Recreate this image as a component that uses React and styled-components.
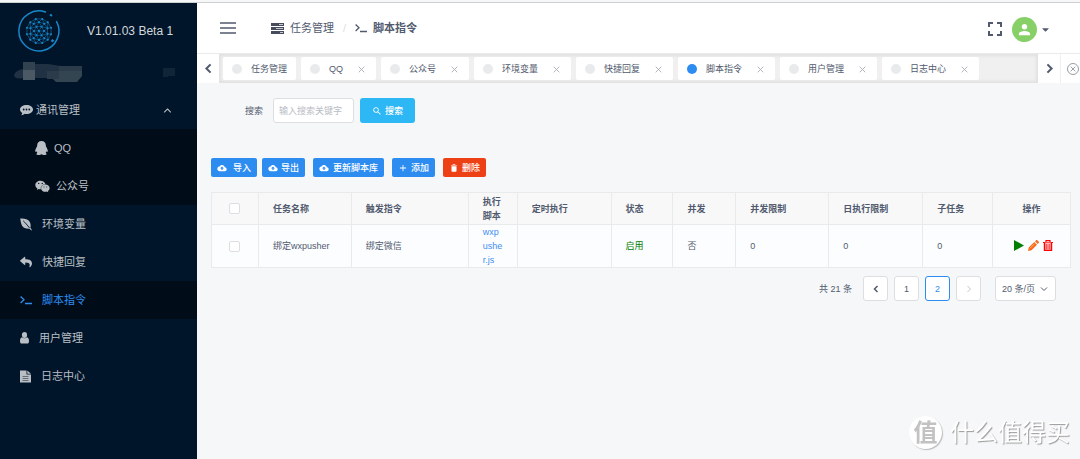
import React from "react";
import styled, { createGlobalStyle } from "styled-components";
import {
  IoMdCloudUpload,
  IoMdAdd,
  IoMdTrash,
  IoMdSearch,
  IoMdPerson,
  IoIosArrowUp,
} from "react-icons/io";
import { FaWeixin, FaReply, FaCaretDown } from "react-icons/fa";

const GlobalStyle = createGlobalStyle`
  * {
    box-sizing: border-box;
  }
  body {
    margin: 0;
    padding-top: 2px;
    background: #f5f7f9;
    color: #515a6e;
    font-family: "Liberation Sans", "Noto Sans CJK SC", sans-serif;
    font-size: 9px;
    line-height: 14px;
  }
  button, input, select {
    font: inherit;
    color: inherit;
    margin: 0;
  }
  button {
    cursor: pointer;
  }
  svg {
    display: block;
    flex-shrink: 0;
  }
`;

const Page = styled.div`
  display: flex;
  min-height: calc(100vh - 2px);
  border-top: 1px solid #cdcfd1;
`;

/* ---------- sidebar ---------- */

const Sidebar = styled.aside`
  width: 197px;
  flex-shrink: 0;
  background: #001529;
  color: #b9bfc5;
`;

const Brand = styled.div`
  display: flex;
  align-items: center;
  gap: 27px;
  height: 51px;
  padding: 4px 0 0 18px;
  font-size: 12px;
  color: #d3d8dc;
`;

const Account = styled.div`
  display: flex;
  align-items: center;
  justify-content: space-between;
  height: 37px;
  padding: 0 22px 0 14px;
`;

const Menu = styled.ul`
  list-style: none;
  margin: 0;
  padding: 0;
`;

const SubMenu = styled(Menu)`
  background: #000c17;
`;

const MenuLink = styled.a`
  display: flex;
  align-items: center;
  gap: ${(p) => p.$gap || 10}px;
  height: 38px;
  padding: 0 24px 0 ${(p) => (p.$nested ? 35 : 20)}px;
  font-size: 11px;
  text-decoration: none;
  color: ${(p) => (p.$active ? "#2d8cf0" : "inherit")};
  background: ${(p) => (p.$active ? "#000c17" : "transparent")};

  > .arrow {
    margin-left: auto;
  }
`;

/* ---------- header ---------- */

const Main = styled.div`
  flex: 1;
  min-width: 0;
`;

const Header = styled.header`
  display: flex;
  align-items: center;
  height: 51px;
  padding: 0 29px 0 23px;
  background: #fff;
  border-bottom: 1px solid #e8eaec;
`;

const IconButton = styled.button`
  display: flex;
  align-items: center;
  padding: 0;
  border: 0;
  background: none;
`;

const Crumbs = styled.nav`
  display: flex;
  align-items: center;
  gap: 6px;
  margin-left: 35px;
  font-size: 11px;
`;

const Crumb = styled.span`
  display: flex;
  align-items: center;
  gap: 6px;
  font-weight: ${(p) => (p.$current ? 700 : 400)};
`;

const Slash = styled.span`
  padding: 0 3px;
  color: #dcdee2;
`;

const Tools = styled.div`
  display: flex;
  align-items: center;
  gap: 10px;
  margin-left: auto;
  padding-top: 2px;
`;

const UserButton = styled(IconButton)`
  gap: 3px;
`;

const Avatar = styled.span`
  display: flex;
  align-items: center;
  justify-content: center;
  width: 25px;
  height: 25px;
  border-radius: 50%;
  background: #87d068;
  color: #fff;
`;

/* ---------- tabs ---------- */

const TabBar = styled.div`
  display: flex;
  height: 29px;
  background: #fff;
`;

const TabArrow = styled(IconButton)`
  justify-content: center;
  width: 22px;
  flex-shrink: 0;
`;

const CloseAll = styled(IconButton)`
  width: 20px;
  padding-left: 6px;
  border-left: 1px solid #f0f0f0;
  color: #8d929c;
`;

const TabList = styled.div`
  display: flex;
  flex: 1;
  gap: 5px;
  min-width: 0;
  padding: 3px 4px;
  overflow: hidden;
  background: #f0f0f0;
  box-shadow: inset 0 0 3px 2px rgba(100, 100, 100, 0.1);
`;

const Tab = styled.div`
  display: flex;
  align-items: center;
  gap: 9px;
  flex-shrink: 0;
  padding: 0 9px;
  border-radius: 2px;
  background: #fff;
`;

const Dot = styled.span`
  width: 10px;
  height: 10px;
  border-radius: 50%;
  background: ${(p) => (p.$active ? "#2d8cf0" : "#e8eaec")};
`;

const TabClose = styled(IconButton)`
  padding: 1px 2px 0 6px;
  color: #a9adb5;
`;

/* ---------- content ---------- */

const Content = styled.main`
  padding: 15px 9px 15px 14px;
`;

const SearchForm = styled.form`
  display: flex;
  align-items: center;
  gap: 6px;
  padding-left: 34px;
`;

const SearchLabel = styled.label`
  margin-right: 4px;
`;

const SearchInput = styled.input`
  width: 81px;
  height: 25px;
  padding: 0 5px;
  border: 1px solid #dcdee2;
  border-radius: 3px;
  background: #fff;
  outline: none;

  &::placeholder {
    color: #b8bcc4;
  }
`;

const Button = styled.button`
  display: inline-flex;
  align-items: center;
  justify-content: center;
  gap: ${(p) => p.$gap || 3}px;
  height: 19px;
  padding: 0 6px;
  border: 0;
  border-radius: 2px;
  font-weight: 500;
  color: #fff;
  background: ${(p) => p.$color || "#2d8cf0"};
`;

const SearchButton = styled(Button)`
  height: 25px;
  padding: 0 12px;
  border-radius: 3px;
`;

const Actions = styled.div`
  display: flex;
  gap: 8px;
  margin: 35px 0 15px;
`;

const ButtonPair = styled.div`
  display: flex;
  gap: 5px;
`;

const Table = styled.table`
  width: 100%;
  table-layout: fixed;
  border-collapse: collapse;
  border: 1px solid #dcdee2;
`;

const Th = styled.th`
  height: 32px;
  padding: 0 14px;
  border: 1px solid #e8eaec;
  background: #f8f8f9;
  text-align: ${(p) => (p.$center ? "center" : "left")};
  font-weight: 700;
`;

const Td = styled.td`
  height: 42px;
  padding: 0 14px;
  border: 1px solid #e8eaec;
  background: #fcfdff;
  word-break: break-all;
  color: ${(p) => p.$color || "inherit"};
`;

const Check = styled.input`
  display: block;
  appearance: none;
  width: 11px;
  height: 11px;
  margin: 0 auto;
  border: 1px solid #dcdee2;
  border-radius: 2px;
  background: #fff;
`;

const ScriptLink = styled.a`
  color: #3f8ff2;
  text-decoration: none;
`;

const RowTools = styled.div`
  display: flex;
  align-items: center;
  justify-content: flex-end;
  gap: 4px;
  padding: 0 3px 2px 0;
`;

const Pager = styled.div`
  display: flex;
  align-items: center;
  justify-content: flex-end;
  gap: 6px;
  margin: 8px 15px 0 0;
`;

const Total = styled.span`
  margin-right: 5px;
`;

const PageButton = styled.button`
  display: flex;
  align-items: center;
  justify-content: center;
  width: 25px;
  height: 25px;
  padding: 0;
  border: 1px solid ${(p) => (p.$current ? "#2d8cf0" : "#dcdee2")};
  border-radius: 3px;
  background: #fff;
  color: ${(p) => (p.$current ? "#2d8cf0" : "#515a6e")};

  &:disabled {
    color: #c5c8ce;
  }
`;

const SizeBox = styled.div`
  position: relative;
  margin-left: 8px;

  svg {
    position: absolute;
    right: 8px;
    top: 9px;
    pointer-events: none;
  }
`;

const SizeSelect = styled.select`
  display: block;
  appearance: none;
  width: 61px;
  height: 25px;
  padding: 0 6px;
  border: 1px solid #dcdee2;
  border-radius: 3px;
  background: #fff;
`;

const Watermark = styled.div`
  position: fixed;
  right: 10px;
  bottom: 10px;
  display: flex;
  align-items: center;
  gap: 8px;
  font-size: 24px;
  line-height: 33px;
  color: #fff;
  text-shadow: 1px 1px 1px #999;
`;

const WatermarkBadge = styled.span`
  width: 33px;
  height: 33px;
  border-radius: 50%;
  background: #fff;
  box-shadow: 1px 1px 1px #bbb;
  text-align: center;
  font-weight: 700;
  color: #c2c2c2;
  text-shadow: none;
`;

/* ---------- icons ---------- */

const ring = (count, radius, offset = 0) =>
  Array.from({ length: count }, (_, i) => {
    const a = ((i + offset) * 2 * Math.PI) / count;
    return [21 + radius * Math.cos(a), 21 + radius * Math.sin(a)];
  });

function Logo() {
  const inner = ring(6, 5);
  const outer = ring(12, 12.5, 0.5);
  const middle = ring(10, 9, 0.5);
  const points = [[21, 21], ...inner, ...middle, ...outer];
  const lines = [];
  points.forEach((a, i) => {
    points.slice(i + 1).forEach((b) => {
      if (Math.hypot(a[0] - b[0], a[1] - b[1]) < 6.6) lines.push([a, b]);
    });
  });
  return (
    <svg width="42" height="42" viewBox="0 0 42 42" fill="none" stroke="#1787cb">
      <path d="M28 2.200A20 20 0 1 0 38.400 11.200" strokeWidth="1.500" />
      <path d="M32 4.500l2 1.400" strokeWidth="2" />
      <path d="M33.500 30l2 1.600" strokeWidth="2.500" />
      {lines.map(([a, b], i) => (
        <path key={i} d={`M${a[0]} ${a[1]}L${b[0]} ${b[1]}`} strokeWidth=".5" />
      ))}
      {points.map(([x, y], i) => (
        <circle key={i} cx={x} cy={y} r="1" fill="#1787cb" stroke="none" />
      ))}
    </svg>
  );
}

const NameMosaic = () => (
  <svg width="73" height="21" viewBox="0 0 73 21">
    <path d="M0 13q2-5 9-6V0h12v2h13l13 2h21v10l-5 5H42l-4-3H9Q1 18 0 13z" fill="#1f3142" />
    <path d="M9 0h12v8H9z" fill="#33424f" />
    <path d="M9 8h12v10H9z" fill="#4b5965" />
    <path d="M33 9h12v8H33zM45 4h23v5H45z" fill="#2b3b4a" />
    <path d="M45 9h23v5l-5 6H42l-3-3h6z" fill="#344552" />
  </svg>
);

const ArrowMosaic = () => (
  <svg width="12" height="9" viewBox="0 0 12 9">
    <path d="M0 0h12v8H5v1H0z" fill="#112539" />
  </svg>
);

const ChatIcon = () => (
  <svg width="13" height="12" viewBox="0 0 13 12">
    <path
      fill="currentColor"
      d="M6.500 1C3 1 0 2.900 0 5.500c0 1.500.9 2.700 2.300 3.500-.2.900-.6 1.500-1.100 2.200 1.500-.2 2.700-.7 3.600-1.400.5.1 1.100.2 1.700.2C10 10 13 8 13 5.500S10 1 6.500 1z"
    />
    <circle cx="3.700" cy="5.500" r=".9" fill="#001529" />
    <circle cx="6.500" cy="5.500" r=".9" fill="#001529" />
    <circle cx="9.300" cy="5.500" r=".9" fill="#001529" />
  </svg>
);

const QqIcon = () => (
  <svg width="13" height="14" viewBox="0 0 13 14">
    <path
      fill="currentColor"
      d="M6.500 0C3.800 0 2.200 1.800 2.200 4.200c0 .5-.2.900-.3 1.500C1 7 .2 8.700.2 10.200c0 .8.500.9 1.200.1.200.6.500 1.100 1 1.600-.7.300-1 .7-1 1.100 0 1.300 3.900 1.200 5.100.3 1.200.9 5.100 1 5.100-.3 0-.4-.3-.8-1-1.100.5-.5.800-1 1-1.600.7.800 1.200.7 1.200-.1 0-1.500-.8-3.200-1.700-4.500-.1-.6-.3-1-.3-1.500C10.800 1.800 9.200 0 6.500 0z"
    />
  </svg>
);

const LeafIcon = () => (
  <svg width="12" height="13" viewBox="0 0 12 13">
    <path
      fill="currentColor"
      d="M.2.500C4 .2 8 .8 9.800 4c1 1.800 1 3.800.6 5.800l1.500 2.200-.7.500-1.500-1.800C6.500 11 3.300 10.200 1.800 7.200.8 5.200.7 2.700.2.500z"
    />
    <path d="M3.200 2.800C5 4.500 7.500 7.200 9.500 10" stroke="#001529" strokeWidth=".9" fill="none" />
  </svg>
);

const TerminalIcon = ({ color = "currentColor" }) => (
  <svg width="12" height="10" viewBox="0 0 12 10" fill="none" stroke={color} strokeWidth="1.300">
    <path d="M.6 1.500L4 4.700.6 8M5 8.500h7" />
  </svg>
);

const PersonIcon = () => (
  <svg width="9" height="12" viewBox="0 0 9 12" fill="currentColor">
    <ellipse cx="4.500" cy="3" rx="2.600" ry="2.900" />
    <path d="M2 5.300C.6 5.600 0 7 0 9c0 1.600.6 2.600 1.800 2.600h5.400C8.400 11.600 9 10.600 9 9c0-2-.6-3.400-2-3.700-1.400 1.400-3.600 1.400-5 0z" />
  </svg>
);

const FileIcon = () => (
  <svg width="11" height="13" viewBox="0 0 11 13">
    <path fill="currentColor" d="M0 .500h6.500v4H11v8H0zM7.300.500L11 3.800H7.300z" />
    <path d="M2.500 6.500h6M2.500 8.500h6M2.500 10.500h6" stroke="#4b5865" strokeWidth=".8" />
  </svg>
);

const MenuIcon = () => (
  <svg width="16" height="12" viewBox="0 0 16 12" stroke="#515a6e" strokeWidth="1.300">
    <path d="M0 1h16M0 6h16M0 11h16" />
  </svg>
);

const TasksIcon = () => (
  <svg width="13" height="11" viewBox="0 0 13 11">
    <path fill="#464c5b" d="M0 0h13v3H0zM0 4h13v3H0zM0 8h13v3H0z" />
    <path stroke="#c4c8d0" strokeWidth="1" d="M8 1.500h4M5 5.500h7M9 9.500h3" />
  </svg>
);

const FullscreenIcon = () => (
  <svg width="14" height="14" viewBox="0 0 14 14" fill="none" stroke="#515a6e" strokeWidth="2">
    <path d="M1 5V1h4M9 1h4v4M13 9v4H9M5 13H1V9" />
  </svg>
);

const Chevron = ({ dir = "left", size = 8, width = 1.5 }) => {
  const d = { left: "M5.500 1L2.500 4l3 3", right: "M2.500 1l3 3-3 3", down: "M1 2.500l3 3 3-3" };
  return (
    <svg width={size} height={size} viewBox="0 0 8 8" fill="none" stroke="currentColor" strokeWidth={width}>
      <path d={d[dir]} />
    </svg>
  );
};

const CrossIcon = () => (
  <svg width="7" height="7" viewBox="0 0 7 7" stroke="currentColor" strokeWidth=".9">
    <path d="M.7.700l5.600 5.600M6.300.700L.7 6.300" />
  </svg>
);

const CircleCloseIcon = () => (
  <svg width="12" height="12" viewBox="0 0 12 12" fill="none" stroke="currentColor" strokeWidth=".9">
    <circle cx="6" cy="6" r="5.500" />
    <path d="M3.700 3.700l4.600 4.600M8.300 3.700L3.700 8.300" />
  </svg>
);

const PlayIcon = () => (
  <svg width="10" height="11" viewBox="0 0 10 11">
    <path d="M0 0l10 5.500L0 11z" fill="green" />
  </svg>
);

const PencilIcon = () => (
  <svg width="11" height="11" viewBox="0 0 11 11">
    <path d="M0 11l.7-3.500L6.300 2l2.700 2.700-5.500 5.600zM7 1.300L8.300 0q.5-.2 1 .2l1.500 1.500q.4.500 0 1L9.700 4z" fill="#fa6b18" />
    <path d="M2 8.300l4.600-4.600" stroke="#ffc59b" strokeWidth=".7" />
  </svg>
);

const BinIcon = () => (
  <svg width="10" height="11" viewBox="0 0 10 11" fill="none" stroke="red">
    <path d="M0 2.500h10M3 2.500V.700h4v1.800" strokeWidth="1.200" />
    <path d="M1.500 2.500v8h7v-8" strokeWidth="1.400" fill="#ffb5b5" />
    <path d="M3.800 4.200v5M6.200 4.200v5" strokeWidth=".8" />
  </svg>
);

/* ---------- data ---------- */

const tabs = ["任务管理", "QQ", "公众号", "环境变量", "快捷回复", "脚本指令", "用户管理", "日志中心"];

const columns = [
  { width: 93, title: "任务名称" },
  { width: 117, title: "触发指令" },
  { width: 49, title: "执行脚本" },
  { width: 94, title: "定时执行" },
  { width: 62, title: "状态" },
  { width: 63, title: "并发" },
  { width: 93, title: "并发限制" },
  { width: 94, title: "日执行限制" },
  { width: 70, title: "子任务" },
  { width: 78, title: "操作", center: true },
];

const Col = styled.col`
  width: ${(p) => (p.$w / 860) * 100}%;
`;

function SideMenu() {
  return (
    <Sidebar>
      <Brand>
        <Logo />
        V1.01.03 Beta 1
      </Brand>
      <Account>
        <NameMosaic />
        <ArrowMosaic />
      </Account>
      <Menu>
        <li>
          <MenuLink href="#" $gap={3}>
            <ChatIcon />
            通讯管理
            <IoIosArrowUp className="arrow" size={11} />
          </MenuLink>
          <SubMenu>
            <li>
              <MenuLink href="#" $nested $gap={6}>
                <QqIcon />
                QQ
              </MenuLink>
            </li>
            <li>
              <MenuLink href="#" $nested $gap={6}>
                <FaWeixin size={15} />
                公众号
              </MenuLink>
            </li>
          </SubMenu>
        </li>
        <li>
          <MenuLink href="#">
            <LeafIcon />
            环境变量
          </MenuLink>
        </li>
        <li>
          <MenuLink href="#">
            <FaReply size={12} />
            快捷回复
          </MenuLink>
        </li>
        <li>
          <MenuLink href="#" $active>
            <TerminalIcon />
            脚本指令
          </MenuLink>
        </li>
        <li>
          <MenuLink href="#">
            <PersonIcon />
            用户管理
          </MenuLink>
        </li>
        <li>
          <MenuLink href="#">
            <FileIcon />
            日志中心
          </MenuLink>
        </li>
      </Menu>
    </Sidebar>
  );
}

function ScriptTable() {
  return (
    <Table>
      <colgroup>
        <Col $w={47} />
        {columns.map((c) => (
          <Col key={c.title} $w={c.width} />
        ))}
      </colgroup>
      <thead>
        <tr>
          <Th>
            <Check type="checkbox" aria-label="全选" />
          </Th>
          {columns.map((c) => (
            <Th key={c.title} $center={c.center}>
              {c.title}
            </Th>
          ))}
        </tr>
      </thead>
      <tbody>
        <tr>
          <Td>
            <Check type="checkbox" aria-label="绑定wxpusher" />
          </Td>
          <Td>绑定wxpusher</Td>
          <Td>绑定微信</Td>
          <Td>
            <ScriptLink href="#">wxpusher.js</ScriptLink>
          </Td>
          <Td />
          <Td $color="green">启用</Td>
          <Td>否</Td>
          <Td>0</Td>
          <Td>0</Td>
          <Td>0</Td>
          <Td>
            <RowTools>
              <IconButton aria-label="执行"><PlayIcon /></IconButton>
              <IconButton aria-label="编辑"><PencilIcon /></IconButton>
              <IconButton aria-label="删除"><BinIcon /></IconButton>
            </RowTools>
          </Td>
        </tr>
      </tbody>
    </Table>
  );
}

export default function App() {
  return (
    <>
      <GlobalStyle />
      <Page>
        <SideMenu />
        <Main>
          <Header>
            <IconButton aria-label="菜单">
              <MenuIcon />
            </IconButton>
            <Crumbs>
              <Crumb>
                <TasksIcon />
                任务管理
              </Crumb>
              <Slash>/</Slash>
              <Crumb $current>
                <TerminalIcon />
                脚本指令
              </Crumb>
            </Crumbs>
            <Tools>
              <IconButton aria-label="全屏">
                <FullscreenIcon />
              </IconButton>
              <UserButton aria-label="用户">
                <Avatar>
                  <IoMdPerson size={15} />
                </Avatar>
                <FaCaretDown size={11} />
              </UserButton>
            </Tools>
          </Header>
          <TabBar>
            <TabArrow aria-label="向左">
              <Chevron size={11} />
            </TabArrow>
            <TabList>
              {tabs.map((name, i) => (
                <Tab key={name}>
                  <Dot $active={name === "脚本指令"} />
                  {name}
                  {i > 0 && (
                    <TabClose aria-label="关闭">
                      <CrossIcon />
                    </TabClose>
                  )}
                </Tab>
              ))}
            </TabList>
            <TabArrow aria-label="向右">
              <Chevron dir="right" size={11} />
            </TabArrow>
            <CloseAll aria-label="关闭全部">
              <CircleCloseIcon />
            </CloseAll>
          </TabBar>
          <Content>
            <SearchForm onSubmit={(e) => e.preventDefault()}>
              <SearchLabel htmlFor="keyword">搜索</SearchLabel>
              <SearchInput id="keyword" placeholder="输入搜索关键字" />
              <SearchButton $color="#2db7f5">
                <IoMdSearch size={10} />
                搜索
              </SearchButton>
            </SearchForm>
            <Actions>
              <ButtonPair>
                <Button $gap={6}>
                  <IoMdCloudUpload size={10} />
                  导入
                </Button>
                <Button>
                  <IoMdCloudUpload size={10} />
                  导出
                </Button>
              </ButtonPair>
              <Button $gap={4}>
                <IoMdCloudUpload size={10} />
                更新脚本库
              </Button>
              <Button>
                <IoMdAdd size={10} />
                添加
              </Button>
              <Button $color="#ed4014">
                <IoMdTrash size={10} />
                删除
              </Button>
            </Actions>
            <ScriptTable />
            <Pager>
              <Total>共 21 条</Total>
              <PageButton aria-label="上一页">
                <Chevron />
              </PageButton>
              <PageButton>1</PageButton>
              <PageButton $current>2</PageButton>
              <PageButton aria-label="下一页" disabled>
                <Chevron dir="right" width={1} />
              </PageButton>
              <SizeBox>
                <SizeSelect aria-label="每页条数">
                  <option>20 条/页</option>
                </SizeSelect>
                <Chevron dir="down" width={1} />
              </SizeBox>
            </Pager>
          </Content>
        </Main>
      </Page>
      <Watermark>
        <WatermarkBadge>值</WatermarkBadge>
        什么值得买
      </Watermark>
    </>
  );
}
